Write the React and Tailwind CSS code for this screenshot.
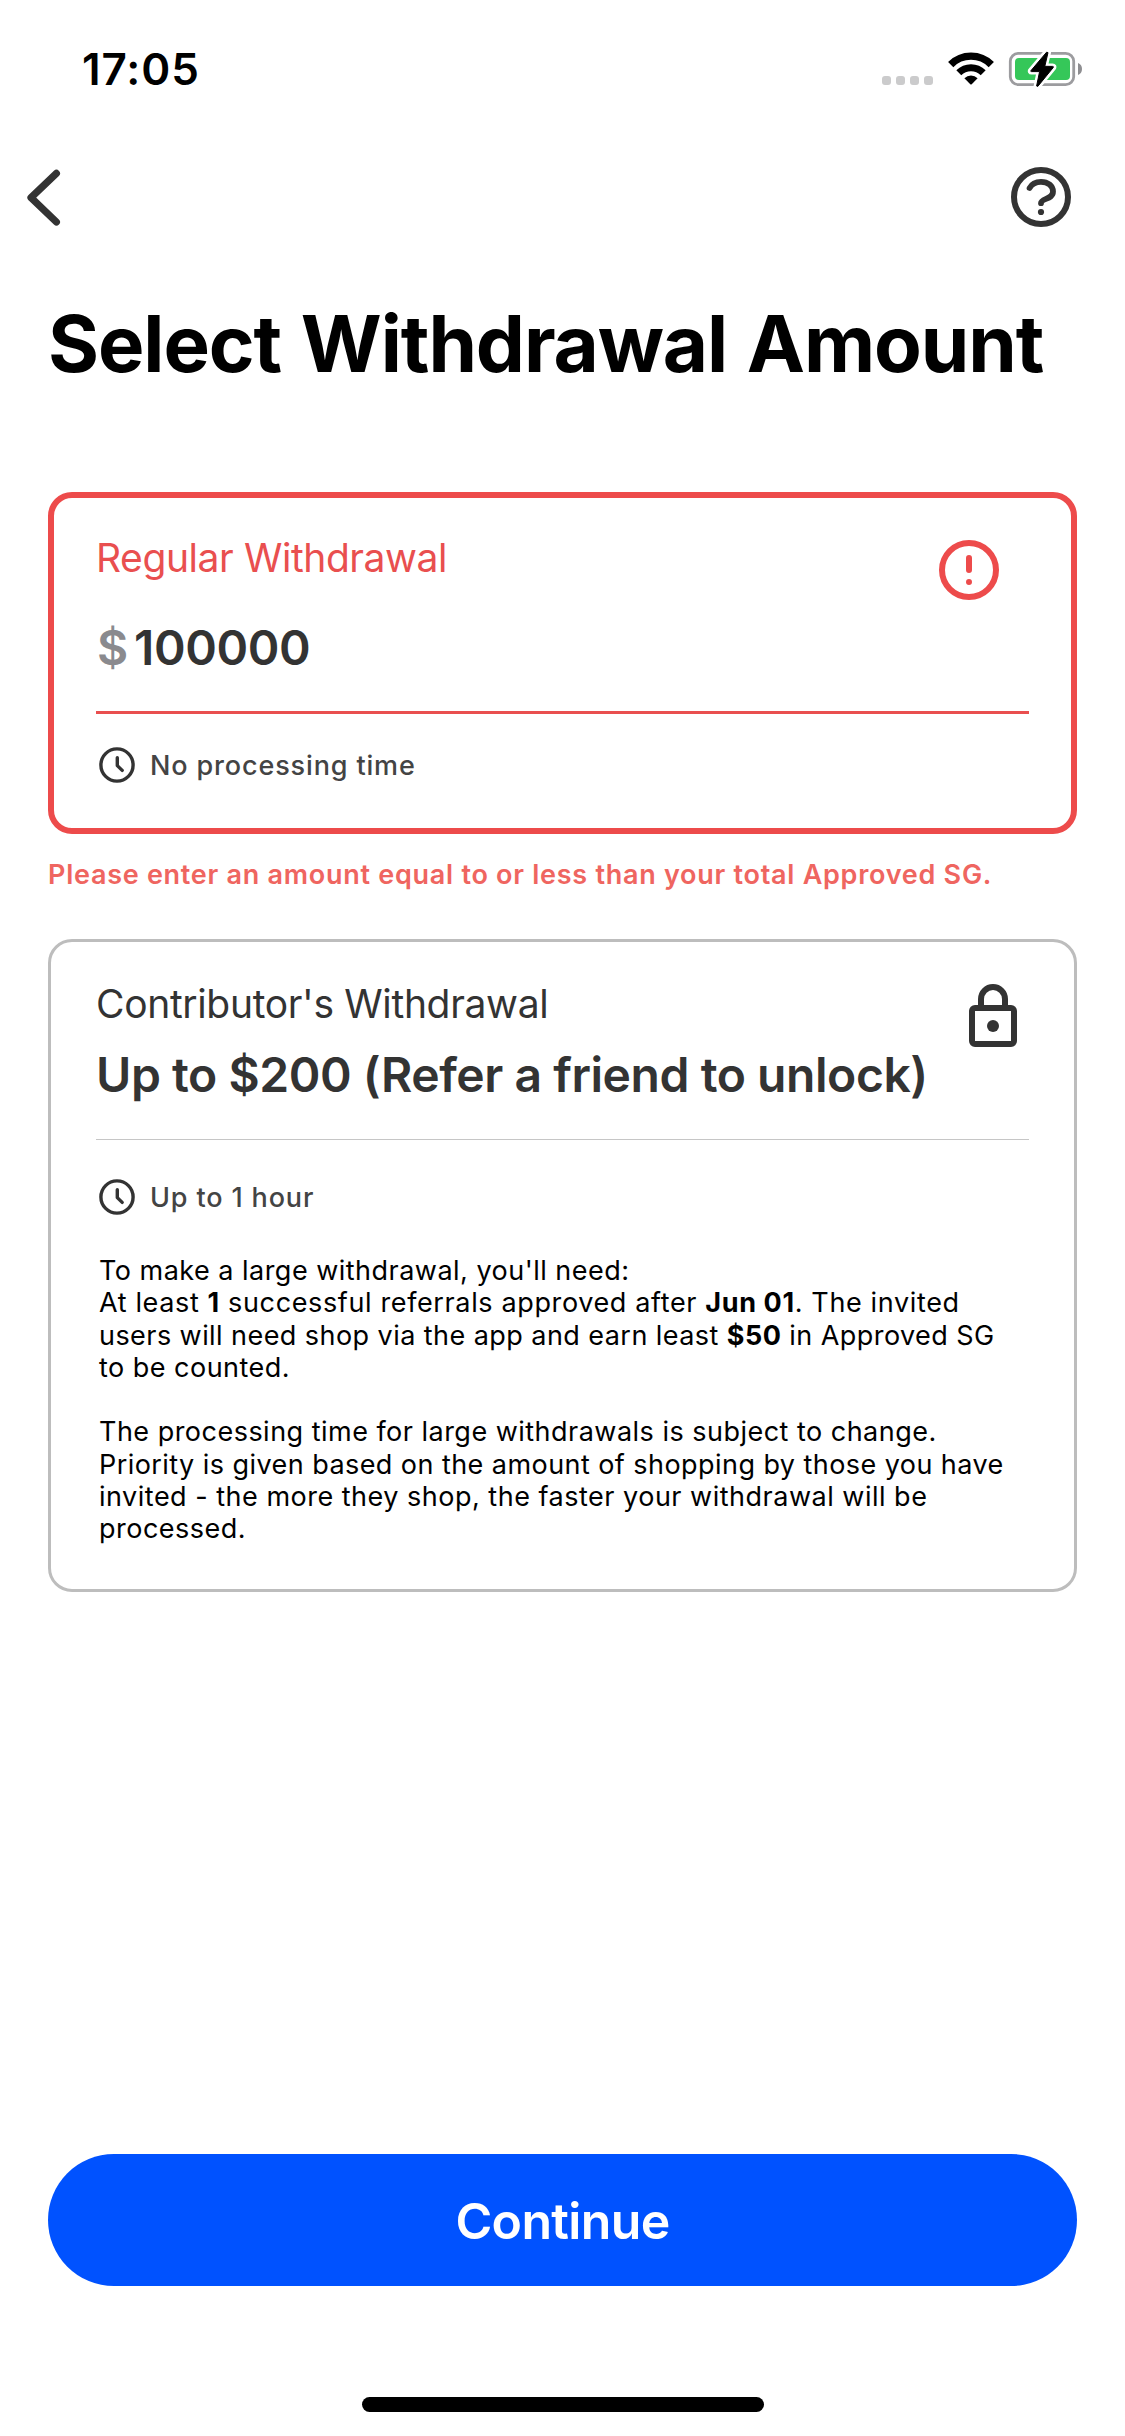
import React from "react";

function WifiIcon() {
  return (
    <svg className="h-[36px] w-[48px]" viewBox="947 51 48 36" fill="none">
      <path d="M950.7 64.6A28.6 28.6 0 0 1 991.3 64.6" stroke="#000" strokeWidth="7.4" />
      <path d="M958.8 72.8A17.3 17.3 0 0 1 983.2 72.8" stroke="#000" strokeWidth="7" />
      <path d="M964.4 78.2A9.6 9.6 0 0 1 977.6 78.2L971.7 84.2Q971 84.9 970.3 84.2Z" fill="#000" />
    </svg>
  );
}

function BatteryIcon() {
  const bolt = "M1046.6 52.2L1031 70.6Q1030.4 71.6 1031.5 71.6L1039.6 71.6L1036.6 86L1037.8 86.4L1053.2 67.6Q1053.8 66.4 1052.6 66.4L1044.8 66.3L1048 52.6Z";
  return (
    <svg className="h-[40px] w-[74px]" viewBox="1008 49 74 40" fill="none">
      <rect x="1010.3" y="53.3" width="63.4" height="31.4" rx="8" stroke="#9c9c9f" strokeWidth="2.8" />
      <rect x="1015" y="58" width="55" height="22" rx="4" fill="#35c759" />
      <path d="M1078 63C1080.6 64 1082 66.3 1082 69C1082 71.7 1080.6 74 1078 75Z" fill="#8e8e91" />
      <path d={bolt} fill="#fff" stroke="#fff" strokeWidth="6" strokeLinejoin="round" />
      <path d={bolt} fill="#000" stroke="#000" strokeWidth="1" strokeLinejoin="round" />
    </svg>
  );
}

function StatusBar() {
  return (
    <div className="flex h-[138px] items-center justify-between pr-[43px] pl-[82px]">
      <span className="text-[44px] leading-[44px] font-semibold tracking-[0.9px] text-black">17:05</span>
      <div className="flex items-center">
        <div className="mt-[23px] mr-[14px] flex gap-[5px]">
          <i className="size-[9px] rounded-[3px] bg-[#cbcbcc]" />
          <i className="size-[9px] rounded-[3px] bg-[#cbcbcc]" />
          <i className="size-[9px] rounded-[3px] bg-[#cbcbcc]" />
          <i className="size-[9px] rounded-[3px] bg-[#cbcbcc]" />
        </div>
        <WifiIcon />
        <div className="ml-[13px]">
          <BatteryIcon />
        </div>
      </div>
    </div>
  );
}

function NavBar() {
  return (
    <div className="flex h-[118px] items-center justify-between pr-[51px] pl-[24px]">
      <button aria-label="Back">
        <svg className="h-[72px] w-[40px]" viewBox="24 161 40 72" fill="none">
          <path d="M56.4 173.4L31 197.7L56.4 222" stroke="#333" strokeWidth="7.2" strokeLinecap="round" strokeLinejoin="round" />
        </svg>
      </button>
      <button aria-label="Help">
        <svg className="size-[66px]" viewBox="1008 164 66 66" fill="none">
          <circle cx="1041" cy="197" r="27" stroke="#333" strokeWidth="6" />
          <path d="M1029.6 188C1031.8 183.8 1036 181.8 1041 181.8C1048 181.8 1053 186 1053 191.6C1053 199.6 1041 198 1041 203.2" stroke="#333" strokeWidth="5.8" strokeLinecap="round" />
          <circle cx="1041" cy="212" r="3.1" fill="#333" />
        </svg>
      </button>
    </div>
  );
}

function ProcessingTime({ children }) {
  return (
    <div className="flex h-[36px] items-center gap-[12px]">
      <svg className="h-[36px] w-[42px]" viewBox="0 0 42 36" fill="none" stroke="#333" strokeWidth="3.4">
        <circle cx="21" cy="18" r="16.1" />
        <path d="M21.3 10.8V18.6L26.2 23.4" strokeLinecap="round" strokeLinejoin="round" />
      </svg>
      <span className="pt-[2px] text-[27px] leading-[36px] font-medium tracking-[0.86px] text-[#444]">{children}</span>
    </div>
  );
}

function AlertIcon() {
  return (
    <svg className="mr-[24px] size-[72px]" viewBox="0 0 24 24" fill="none" stroke="#ed4b4b" strokeWidth="2">
      <circle cx="12" cy="12" r="9" />
      <path d="M12 8V12M12 16V16.01" strokeLinecap="round" />
    </svg>
  );
}

function LockIcon() {
  return (
    <svg className="mt-px size-[72px]" viewBox="0 0 24 24" fill="none" stroke="#333" strokeWidth="2">
      <rect x="5" y="9" width="14" height="12" rx="1" />
      <path d="M8 9V6A4 4 0 0 1 16 6V9" />
      <circle cx="12" cy="15" r="2" fill="#333" stroke="none" />
    </svg>
  );
}

export default function App() {
  return (
    <div className="flex h-[2436px] w-[1125px] flex-col bg-white font-[Inter,sans-serif]">
      <StatusBar />
      <NavBar />

      <main className="px-[48px] pt-[38px]">
        <h1 className="text-[78px] leading-[100px] font-bold tracking-[-1.1px] whitespace-nowrap text-black [word-spacing:2.5px]">
          Select Withdrawal Amount
        </h1>

        <section className="mt-[98px] h-[342px] rounded-[24px] border-[6px] border-[#ed4b4b] px-[42px] pt-[36px]">
          <div className="flex items-start justify-between">
            <div>
              <h2 className="text-[39px] leading-[48px] tracking-[-0.42px] text-[#e94f4f]">Regular Withdrawal</h2>
              <div className="mt-[36px] flex pl-px text-[48px] leading-[60px] font-semibold">
                <span className="w-[37px] text-[#8a8a8e]">$</span>
                <span className="tracking-[-0.4px] text-[#333]">100000</span>
              </div>
            </div>
            <AlertIcon />
          </div>
          <div className="mt-[33px] mb-[33px] h-[3px] bg-[#e94f4f]" />
          <ProcessingTime>No processing time</ProcessingTime>
        </section>

        <p className="mt-[23px] text-[27px] leading-[36px] font-semibold tracking-[0.73px] whitespace-nowrap text-[#ef6560]">
          Please enter an amount equal to or less than your total Approved SG.
        </p>

        <section className="mt-[46px] h-[653px] rounded-[24px] border-[3px] border-[#bdbdbd] px-[45px] pt-[38px]">
          <div className="flex items-start justify-between">
            <div className="whitespace-nowrap text-[#333]">
              <h2 className="text-[39px] leading-[48px] tracking-[-0.34px]">Contributor's Withdrawal</h2>
              <p className="mt-[17px] text-[48px] leading-[60px] font-semibold tracking-[-0.44px]">
                Up to $200 (Refer a friend to unlock)
              </p>
            </div>
            <LockIcon />
          </div>
          <div className="mt-[34px] mb-[39px] h-px bg-[#c6c6c6]" />
          <ProcessingTime>Up to 1 hour</ProcessingTime>
          <div className="mt-[40px] pl-[3px] text-[27px] leading-[32.25px] tracking-[0.48px] whitespace-nowrap text-black">
            <p>
              To make a large withdrawal, you'll need:
              <br />
              <span className="tracking-[0.63px]">
                At least <b>1</b> successful referrals approved after <b>Jun 01</b>. The invited
              </span>
              <br />
              <span className="tracking-[0.44px]">
                users will need shop via the app and earn least <b>$50</b> in Approved SG
              </span>
              <br />
              to be counted.
            </p>
            <p className="mt-[32.25px]">
              The processing time for large withdrawals is subject to change.
              <br />
              <span className="tracking-[0.44px]">
                Priority is given based on the amount of shopping by those you have
              </span>
              <br />
              <span className="tracking-[0.5px]">
                invited - the more they shop, the faster your withdrawal will be
              </span>
              <br />
              processed.
            </p>
          </div>
        </section>
      </main>

      <footer className="mt-auto flex flex-col items-center px-[48px] pb-[24px]">
        <button className="h-[132px] w-full rounded-full bg-[#0052ff] pt-px text-[50px] leading-[60px] font-semibold tracking-[-0.65px] text-white">
          Continue
        </button>
        <div className="mt-[111px] h-[15px] w-[402px] rounded-full bg-black" />
      </footer>
    </div>
  );
}
